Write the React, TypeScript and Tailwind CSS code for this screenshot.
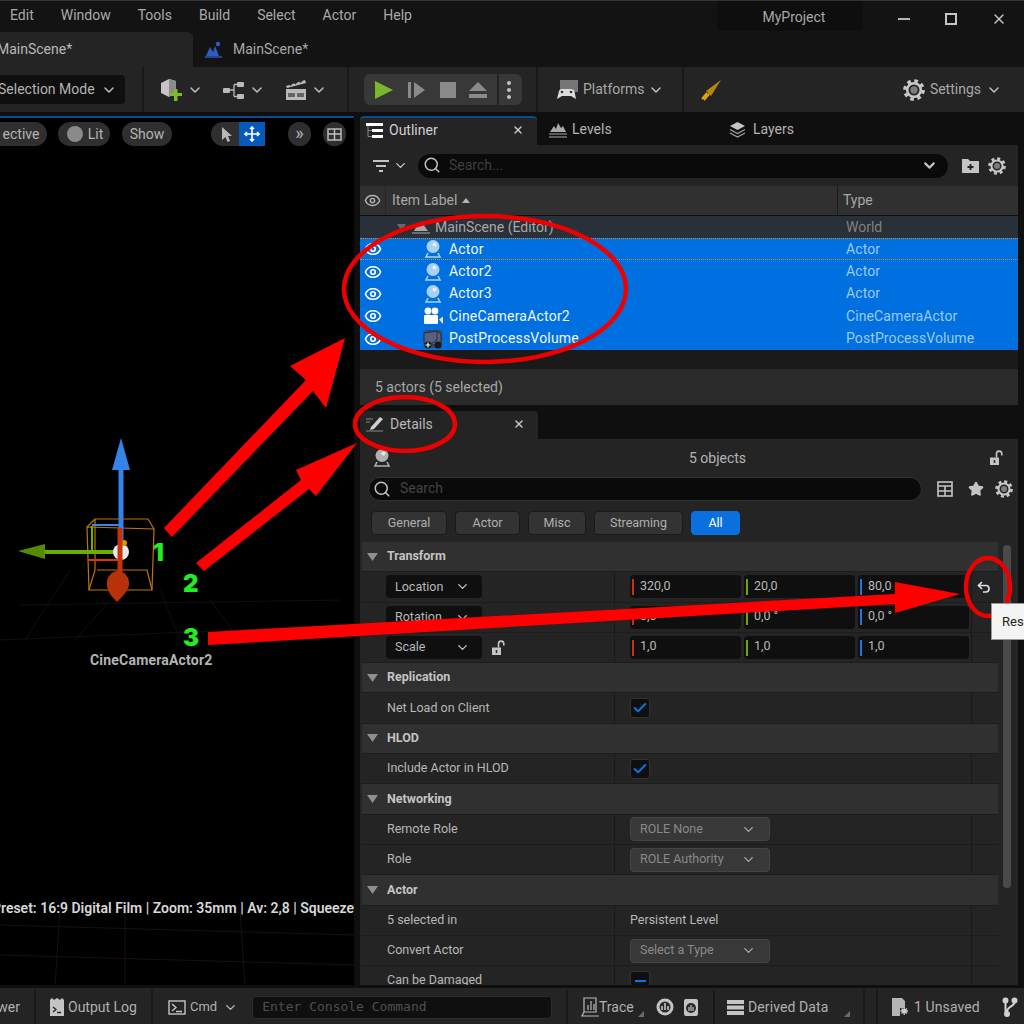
import { ChevronDown, Eye, Search, Star, X, Check } from "lucide-react";
import type { ReactNode } from "react";

function Chevron({ size = 16, className = "text-[#c0c0c0]" }: { size?: number; className?: string }) {
  return <ChevronDown size={size} strokeWidth={2.2} className={className} />;
}

function ActorIcon({ color = "#a9d0f5", size = 20 }: { color?: string; size?: number }) {
  return (
    <svg width={size} height={size} viewBox="0 0 20 20">
      <circle cx="10" cy="7.5" r="6.5" fill={color} />
      <circle cx="11.5" cy="5.5" r="2" fill="#ffffff" opacity="0.7" />
      <path d="M5 14 L3 18 H17 L15 14" fill="none" stroke={color} strokeWidth="1.6" />
    </svg>
  );
}

function CineIcon() {
  return (
    <svg width="20" height="18" viewBox="0 0 20 18">
      <circle cx="5" cy="4" r="3.4" fill="#fff" />
      <circle cx="12" cy="4" r="3.4" fill="#fff" />
      <rect x="1" y="8" width="14" height="9" rx="1" fill="#fff" />
      <path d="M16 12.5 L20 9.5 V17 Z" fill="#dfe9f5" />
    </svg>
  );
}

function VolumeIcon() {
  return (
    <svg width="20" height="20" viewBox="0 0 20 20">
      <rect x="1" y="1" width="18" height="18" rx="3" fill="#3d4a66" />
      <path d="M1 4 L14 2 L18 5 V14 L5 17 L1 14 Z" fill="#55617e" stroke="#1c2130" strokeWidth="0.8" />
      <path d="M14 2 V11 L5 17" fill="none" stroke="#1c2130" strokeWidth="0.8" />
      <circle cx="15" cy="16" r="3.5" fill="#191919" />
      <circle cx="5" cy="16" r="3.5" fill="#191919" />
      <path d="M5 13.5 V18.5 M2.5 16 H7.5" stroke="#fff" strokeWidth="1.2" />
    </svg>
  );
}

function LockOpen({ size = 16 }: { size?: number }) {
  return (
    <svg width={size} height={size} viewBox="0 0 16 16">
      <rect x="1" y="7.5" width="9" height="7.5" fill="#c4c4c4" />
      <rect x="4.7" y="10" width="1.6" height="3" fill="#333" />
      <path d="M7.5 7.5 V3.8 A2.6 2.6 0 0 1 12.8 3.8 V5.5" fill="none" stroke="#c4c4c4" strokeWidth="1.6" />
    </svg>
  );
}

function Gear({ size = 18 }: { size?: number }) {
  return (
    <svg width={size} height={size} viewBox="0 0 24 24" fill="none">
      <circle cx="12" cy="12" r="10" stroke="#c8c8c8" strokeWidth="3.6" strokeDasharray="4 3.854" />
      <circle cx="12" cy="12" r="7.4" stroke="#c8c8c8" strokeWidth="2.8" />
      <circle cx="12" cy="12" r="4" fill="#7c7c7c" />
    </svg>
  );
}

function Divider() {
  return <div className="h-full w-[2px] bg-[#181818]" />;
}

function CornerMark() {
  return (
    <svg width="6" height="6" viewBox="0 0 6 6" className="mt-[14px] shrink-0">
      <path d="M6 0 V6 H0 Z" fill="#6a6a6a" />
    </svg>
  );
}

function ToolbarIconGroup({ icon, width }: { icon: ReactNode; width: string }) {
  return (
    <div className={`flex items-center gap-[3px] ${width}`}>
      {icon}
      <Chevron />
    </div>
  );
}

function Pill({ children, className = "" }: { children: ReactNode; className?: string }) {
  return (
    <div className={`flex h-[24px] items-center justify-center rounded-full bg-[#2f2f2f] text-[14px] text-[#b4b4b4] ${className}`}>
      {children}
    </div>
  );
}

const actors = [
  { name: "Actor", type: "Actor", icon: <ActorIcon />, focus: true },
  { name: "Actor2", type: "Actor", icon: <ActorIcon /> },
  { name: "Actor3", type: "Actor", icon: <ActorIcon /> },
  { name: "CineCameraActor2", type: "CineCameraActor", icon: <CineIcon /> },
  { name: "PostProcessVolume", type: "PostProcessVolume", icon: <VolumeIcon /> },
];

function Triangle() {
  return (
    <svg width="11" height="8" viewBox="0 0 11 8" className="shrink-0">
      <path d="M0 0 H11 L5.5 8 Z" fill="#8f8f8f" />
    </svg>
  );
}

function SectionHeader({ label }: { label: string }) {
  return (
    <div className="flex h-[30.3px] items-center gap-[8px] border-b border-[#1c1c1c] bg-[#303030] pl-[3px] text-[12.5px] font-bold text-[#c4c4c4]">
      <span className="flex w-[14px] justify-center">
        <Triangle />
      </span>
      {label}
    </div>
  );
}

function PropertyRow({ left, right }: { left: ReactNode; right?: ReactNode }) {
  return (
    <div className="flex h-[30.3px] items-center overflow-hidden border-b border-[#1c1c1c] bg-[#242424] text-[12.5px] text-[#b8b8b8]">
      <div className="flex h-full w-[253px] shrink-0 items-center border-r border-[#1a1a1a] pl-[25px]">{left}</div>
      <div className="flex h-full w-[357px] shrink-0 items-center border-r border-[#1a1a1a] pl-[15px]">{right}</div>
    </div>
  );
}

function AxisField({ value, color }: { value: string; color: string }) {
  return (
    <div className="flex h-[23px] w-[111px] items-center rounded-[4px] bg-[#0f0f0f] pl-[2px] text-[12.5px] text-[#b8b8b8]">
      <span className={`mr-[6px] h-[16px] w-[2px] ${color}`} />
      <span className="-mt-[2px]">{value}</span>
    </div>
  );
}

function VectorFields({ values }: { values: string[] }) {
  return (
    <div className="flex gap-[3px]">
      <AxisField value={values[0]} color="bg-[#c9300f]" />
      <AxisField value={values[1]} color="bg-[#6aa500]" />
      <AxisField value={values[2]} color="bg-[#1f76e0]" />
    </div>
  );
}

function TransformSelect({ label }: { label: string }) {
  return (
    <div className="-ml-[1px] flex h-[23px] w-[96px] items-center justify-between rounded-[4px] bg-[#0f0f0f] pl-[9px] pr-[12px] text-[12.5px] text-[#b8b8b8]">
      {label}
      <Chevron size={15} />
    </div>
  );
}

function Checkbox({ dash }: { dash?: boolean }) {
  return (
    <div className="flex h-[20px] w-[20px] items-center justify-center rounded-[3px] border border-[#333] bg-[#0f0f0f]">
      {dash ? <div className="h-[2px] w-[11px] bg-[#0a74e8]" /> : <Check size={16} strokeWidth={3} className="text-[#0a74e8]" />}
    </div>
  );
}

function RoleSelect({ label }: { label: string }) {
  return (
    <div className="flex h-[24px] w-[140px] items-center justify-between rounded-[4px] border border-[#444] bg-[#383838] pl-[9px] pr-[13px] text-[12.5px] text-[#8a8a8a]">
      {label}
      <Chevron size={15} className="text-[#a8a8a8]" />
    </div>
  );
}

function FilterChip({ label, width, active }: { label: string; width: string; active?: boolean }) {
  return (
    <div
      className={`flex h-[24px] items-center justify-center rounded-[4px] border text-[12.5px] ${width} ${
        active ? "border-[#0a70e0] bg-[#0a70e0] text-white" : "border-[#1a1a1a] bg-[#333333] text-[#b0b0b0]"
      }`}
    >
      {label}
    </div>
  );
}

function Gizmo() {
  return (
    <svg className="absolute left-0 top-0" width="354" height="870" viewBox="0 118 354 870">
      {/* floor grid */}
      <g stroke="#101010" strokeWidth="1" fill="none">
        <path d="M0 640 L354 625 M20 605 L340 600 M70 570 L25 640 M110 600 L75 640 M160 590 L180 640 M210 600 L240 640" />
      </g>
      <g stroke="#1a0f0f" strokeWidth="1" fill="none">
        <path d="M0 925 L354 935 M0 955 L354 965 M60 910 L55 985 M125 910 L125 985 M240 910 L245 985" />
      </g>
      {/* selection box */}
      <g stroke="#b9760f" strokeWidth="1.2" fill="none">
        <path d="M87 527 L154 529 L152 590 L89 590 Z" />
        <path d="M95 519 L148 519 L154 529 M95 519 L87 527 M95 519 V570 L89 590 M97 570 H147 L152 590" />
      </g>
      <path d="M92 525 H120" stroke="#3a86e8" strokeWidth="2" />
      <path d="M92 526 V552" stroke="#6fae00" strokeWidth="2" />
      <path d="M88 560 H118" stroke="#d8360c" strokeWidth="2" />
      {/* green axis */}
      <path d="M45 552 H116" stroke="#6aaf00" strokeWidth="4" />
      <path d="M18 551 L45 544 V559 Z" fill="#558c00" />
      {/* blue axis */}
      <path d="M121 470 V545" stroke="#3583e8" strokeWidth="5" />
      <path d="M121 438 L130 470 H112 Z" fill="#3583e8" />
      <circle cx="121" cy="552" r="8" fill="#e8e8e8" />
      <circle cx="124" cy="543" r="3" fill="#d99a00" />
      {/* red axis */}
      <path d="M120 528 V575" stroke="#c8320b" strokeWidth="5" />
      <path d="M118 571 C125 571 130 578 129 585 C128 591 122 597 117 602 C112 597 107 591 107 585 C106 578 111 571 118 571 Z" fill="#b7310b" />
    </svg>
  );
}

function Annotations() {
  return (
    <>
      <svg className="pointer-events-none absolute left-0 top-0" width="1024" height="1024" viewBox="0 0 1024 1024">
        <g fill="none" stroke="#ef0000" strokeWidth="4.5">
          <ellipse cx="485" cy="289" rx="141" ry="73" />
          <ellipse cx="405" cy="424" rx="50" ry="27" />
          <ellipse cx="988" cy="587" rx="22" ry="29" />
        </g>
        <g fill="#ff0000">
          <path d="M164 528 L306 380 L290 366 L345 338 L326 408 L313 391 L172 537 Z" />
          <path d="M196 563 L301 480 L296 470 L357 443 L316 496 L309 489 L204 571 Z" />
          <path d="M208 632 L895 594 L895 582 L960 594 L895 613 L895 604 L208 645 Z" />
        </g>
      </svg>
      <span className="absolute left-[153px] top-[539px] text-[24px] font-black leading-[28px] text-[#1fee1f] [font-family:Inter,sans-serif]">1</span>
      <span className="absolute left-[183px] top-[570px] text-[24px] font-black leading-[28px] text-[#1fee1f] [font-family:Inter,sans-serif]">2</span>
      <span className="absolute left-[183px] top-[624px] text-[24px] font-black leading-[28px] text-[#1fee1f] [font-family:Inter,sans-serif]">3</span>
      {/* reset tooltip */}
      <div className="absolute left-[991px] top-[603px] flex h-[37px] w-[40px] items-center border border-[#999] bg-[#f4f4f4] pl-[10px] text-[13px] text-[#222]">
        Reset
      </div>
      <svg className="absolute left-[977px] top-[580px]" width="14" height="14" viewBox="0 0 14 14" fill="none" stroke="#e0e0e0" strokeWidth="1.6">
        <path d="M5 2 L1.5 5.5 L5 9" />
        <path d="M1.5 5.5 H9 C13 5.5 13 12 9 12 H6" />
      </svg>
    </>
  );
}

export default function App() {
  return (
    <div className="relative flex h-[1024px] w-[1024px] flex-col overflow-hidden bg-[#131313] text-[14px] text-[#b4b4b4] [font-family:Roboto,'Noto_Sans',sans-serif]">
      {/* Menu bar */}
      <div className="flex h-[32px] shrink-0 items-center border-t border-[#333] pb-[2px] pl-[10px]">
        <div className="flex gap-[27px] text-[#aaaaaa]">
          {["Edit", "Window", "Tools", "Build", "Select", "Actor", "Help"].map((m) => (
            <span key={m}>{m}</span>
          ))}
        </div>
        <div className="ml-[305px] flex h-[30px] w-[146px] items-center justify-center self-start rounded-b-[6px] bg-[#0e0e0e] pl-[8px] pt-[2px] text-[#a8a8a8]">
          MyProject
        </div>
        <div className="ml-[30px] flex items-center gap-[35px] pl-[5px] text-[#c4c4c4]">
          <div className="mt-[6px] h-[2px] w-[12px] bg-[#b4b4b4]" />
          <div className="mt-[6px] h-[12px] w-[12px] border-[2px] border-[#c4c4c4]" />
          <X size={16} strokeWidth={2.2} className="mt-[6px] translate-x-[-1px]" />
        </div>
      </div>

      {/* Level tabs */}
      <div className="flex h-[35px] shrink-0 items-center">
        <div className="flex h-full w-[193px] items-center rounded-tr-[6px] bg-[#242424] text-[#b8b8b8]">
          <span className="-ml-[3px]">MainScene*</span>
        </div>
        <div className="ml-[12px] flex items-center gap-[11px] text-[#a8a8a8]">
          <svg width="17" height="17" viewBox="0 0 17 17">
            <path d="M1 15 L5 6 L8 11 L10 5 L14 15 Z" fill="#2f5bc4" />
            <path d="M0 16 H17" stroke="#2f5bc4" strokeWidth="1.4" />
            <circle cx="13" cy="3" r="2.2" fill="#2f5bc4" />
          </svg>
          <span>MainScene*</span>
        </div>
      </div>

      {/* Main toolbar */}
      <div className="flex h-[45px] shrink-0 items-center bg-[#242424]">
        <div className="flex h-full w-[142px] items-center">
          <div className="flex h-[29px] w-[125px] items-center justify-between rounded-r-[4px] bg-[#0f0f0f] pr-[8px] text-[#b4b4b4]">
            <span className="-ml-[2px]">Selection Mode</span>
            <Chevron />
          </div>
        </div>
        <Divider />
        <div className="flex h-full w-[203px] items-center pl-[16px]">
          <ToolbarIconGroup
            width="w-[62px]"
            icon={
              <svg width="24" height="24" viewBox="0 0 24 24">
                <path d="M1 5 L9 1 L16 3 V13 L9 19 L1 15 Z" fill="#c4c4c4" />
                <path d="M9 1 L16 3 V13 L9 19 Z" fill="#8c8c8c" />
                <path d="M14 11 H17.5 V15 H22 V18 H17.5 V23 H14 V18 H10 V15 H14 Z" fill="#7dbb2a" />
              </svg>
            }
          />
          <ToolbarIconGroup
            width="w-[62px]"
            icon={
              <svg width="24" height="22" viewBox="0 0 24 22" fill="#b9b9b9">
                <rect x="1" y="9" width="7" height="5" rx="1" />
                <rect x="15" y="3" width="7" height="5" rx="1" />
                <rect x="15" y="15" width="7" height="5" rx="1" />
                <path d="M8 11 H12 M12 5.5 V17.5 M12 5.5 H15 M12 17.5 H15" stroke="#b9b9b9" strokeWidth="1.3" fill="none" />
              </svg>
            }
          />
          <ToolbarIconGroup
            width="w-[60px]"
            icon={
              <svg width="24" height="24" viewBox="0 0 24 24" fill="#b9b9b9">
                <path d="M2 8 L21 2 L22 5 L3 10 Z" />
                <path d="M6 7.5 L8 4.8 M11 6 L13 3.5 M16 4.5 L18 2.5" stroke="#242424" strokeWidth="1.5" />
                <rect x="2" y="11" width="20" height="11" />
                <rect x="4" y="15" width="7" height="4" fill="#666" />
                <rect x="13" y="15" width="7" height="4" fill="#666" />
              </svg>
            }
          />
        </div>
        <Divider />
        <div className="flex h-full w-[187px] items-center pl-[15px]">
          <div className="flex h-[31px] w-[158px] items-center rounded-[6px] bg-[#383838]">
            <svg width="20" height="20" viewBox="0 0 20 20" className="ml-[10px]">
              <path d="M1 1 L19 10 L1 19 Z" fill="#79b82c" />
            </svg>
            <svg width="18" height="18" viewBox="0 0 18 18" className="ml-[14px]" fill="#8a8a8a">
              <rect x="0" y="1" width="3" height="16" />
              <path d="M6 1 L17 9 L6 17 Z" />
            </svg>
            <div className="ml-[14px] h-[16px] w-[16px] bg-[#8a8a8a]" />
            <svg width="20" height="18" viewBox="0 0 20 18" className="ml-[12px]" fill="#8a8a8a">
              <path d="M10 1 L19 10 H1 Z" />
              <rect x="1" y="13" width="18" height="4" />
            </svg>
            <div className="ml-[9px] h-full w-[2px] bg-[#242424]" />
            <div className="ml-[8px] flex flex-col gap-[3px]">
              <span className="h-[4px] w-[4px] rounded-full bg-[#c4c4c4]" />
              <span className="h-[4px] w-[4px] rounded-full bg-[#c4c4c4]" />
              <span className="h-[4px] w-[4px] rounded-full bg-[#c4c4c4]" />
            </div>
          </div>
        </div>
        <Divider />
        <div className="flex h-full w-[144px] items-center gap-[3px] pl-[18px] text-[#a8a8a8]">
          <svg width="24" height="22" viewBox="0 0 24 22">
            <rect x="4" y="1" width="18" height="12" fill="#777" />
            <path d="M1 20 L3 12 C3.5 10.5 5 10 6 10 H15 C17 10 18 11 18.5 12.5 L20 20 L15 17 H6 Z" fill="#dcdcdc" />
            <circle cx="6" cy="13" r="1.3" fill="#333" />
            <circle cx="15" cy="13" r="1.3" fill="#333" />
          </svg>
          <span>Platforms</span>
          <Chevron />
        </div>
        <Divider />
        <div className="flex h-full flex-1 items-center pl-[16px] pr-[22px]">
          <svg width="22" height="22" viewBox="0 0 22 22">
            <path d="M21 1 L11 17 L6 12 Z" fill="#b8860b" />
            <path d="M7 14 L2 20 M9 15 L4 21" stroke="#d9a514" strokeWidth="2" />
          </svg>
          <div className="ml-auto flex items-center gap-[5px] text-[#a8a8a8]">
            <Gear size={22} />
            <span>Settings</span>
            <Chevron />
          </div>
        </div>
      </div>

      {/* Content */}
      <div className="flex min-h-0 flex-1 bg-[#0f0f0f]">
        {/* Viewport */}
        <div className="flex h-[873px] w-[354px] shrink-0 flex-col pt-[4px]">
          <div className="h-[2px] shrink-0 bg-[#0b4a8c]" />
          <div className="relative flex-1 overflow-hidden bg-black">
            <Gizmo />
            <div className="relative flex items-center pt-[4px]">
              <Pill className="w-[47px] rounded-l-none pr-[5px]">ective</Pill>
              <Pill className="ml-[11px] w-[52px] gap-[5px] pl-[2px]">
                <span className="h-[16px] w-[16px] rounded-full bg-[#8a8a8a]" />
                Lit
              </Pill>
              <Pill className="ml-[12px] w-[50px]">Show</Pill>
              <div className="ml-[39px] flex h-[24px] w-[54px] items-center overflow-hidden rounded-l-full bg-[#2f2f2f]">
                <svg width="28" height="24" viewBox="0 0 28 24" className="shrink-0">
                  <path d="M11 5 L21 14 H17 L19 19 L16.5 20 L14.5 15 L11 18 Z" fill="#b8b8b8" />
                </svg>
                <div className="flex h-full flex-1 items-center justify-center bg-[#0559b8]">
                  <svg width="16" height="16" viewBox="0 0 16 16" fill="none" stroke="#fff" strokeWidth="1.6">
                    <path d="M8 1 V15 M1 8 H15 M6 3 L8 1 L10 3 M6 13 L8 15 L10 13 M3 6 L1 8 L3 10 M13 6 L15 8 L13 10" />
                  </svg>
                </div>
              </div>
              <Pill className="ml-[23px] w-[23px] pb-[3px] text-[18px] text-[#a0a0a0]">»</Pill>
              <Pill className="ml-[12px] w-[23px]">
                <svg width="15" height="13" viewBox="0 0 15 13" fill="none" stroke="#c4c4c4" strokeWidth="1.4">
                  <rect x="1" y="1" width="13" height="11" />
                  <path d="M7.5 1 V12 M1 6 H14" />
                </svg>
              </Pill>
            </div>
            <span className="absolute left-[90px] top-[532px] text-[14px] font-bold tracking-[0.2px] text-[#b4b4b4]">CineCameraActor2</span>
            <span className="absolute -left-[8px] top-[780px] whitespace-nowrap text-[14px] font-semibold text-[#d8d8d8]">
              Preset: 16:9 Digital Film | Zoom: 35mm | Av: 2,8 | Squeeze
            </span>
          </div>
        </div>

        {/* Right side panels */}
        <div className="ml-[6px] flex h-[873px] w-[658px] shrink-0 flex-col overflow-hidden">
          {/* Outliner tabs */}
          <div className="flex h-[33px] shrink-0 pt-[4px] text-[#b4b4b4]">
            <div className="flex h-full w-[177px] shrink-0 items-center rounded-t-[4px] border-t-2 border-[#0b4a8c] bg-[#242424] pb-[3px] pl-[6px] text-[#d0d0d0]">
              <svg width="17" height="15" viewBox="0 0 17 15" className="mr-[6px]">
                <rect x="0" y="0" width="17" height="3" fill="#fff" />
                <rect x="6" y="6" width="11" height="3" fill="#fff" />
                <rect x="6" y="12" width="11" height="3" fill="#fff" />
                <path d="M2 3 V13.5 H6 M2 7.5 H6" stroke="#888" fill="none" />
              </svg>
              Outliner
              <X size={12} strokeWidth={3} className="ml-auto mr-[13px] text-[#c4c4c4]" />
            </div>
            <div className="ml-[12px] flex w-[184px] items-center gap-[5px] pb-[2px]">
              <svg width="18" height="16" viewBox="0 0 18 16" fill="#a8a8a8">
                <path d="M1 10 L5 4 L7 7 L9 1 L12 6 L14 4 L17 10 Z" />
                <path d="M0 12 H18 M0 15 H18" stroke="#a8a8a8" />
              </svg>
              Levels
            </div>
            <div className="-ml-[4px] flex items-center gap-[7px] pb-[2px]">
              <svg width="17" height="17" viewBox="0 0 17 17">
                <path d="M8.5 1 L16 5 L8.5 9 L1 5 Z" fill="#c4c4c4" />
                <path d="M1 8.5 L8.5 12.5 L16 8.5 M1 12 L8.5 16 L16 12" stroke="#a0a0a0" strokeWidth="1.2" fill="none" />
              </svg>
              Layers
            </div>
          </div>
          {/* Outliner toolbar */}
          <div className="flex h-[41px] shrink-0 items-center bg-[#242424] pl-[13px]">
            <svg width="16" height="12" viewBox="0 0 16 12" fill="#c4c4c4">
              <rect x="0" y="0" width="16" height="2" />
              <rect x="3" y="5" width="10" height="2" />
              <rect x="6" y="10" width="4" height="2" />
            </svg>
            <Chevron size={15} className="ml-[4px] text-[#c4c4c4]" />
            <div className="ml-[10px] flex h-[24px] w-[530px] items-center rounded-full bg-[#0a0a0a] pb-[1px] pl-[5px] pr-[10px] text-[#3f3f3f]">
              <Search size={18} strokeWidth={2} className="mr-[8px] text-[#c0c0c0]" />
              Search...
              <ChevronDown size={17} strokeWidth={3} className="ml-auto text-[#c4c4c4]" />
            </div>
            <svg width="17" height="15" viewBox="0 0 17 15" className="ml-[14px]">
              <path d="M0 1 H6 L8 3 H17 V15 H0 Z" fill="#c4c4c4" />
              <path d="M8.5 6 V12 M5.5 9 H11.5" stroke="#222" strokeWidth="1.8" />
            </svg>
            <div className="ml-[9px]">
              <Gear />
            </div>
          </div>
          {/* Column header */}
          <div className="flex h-[29px] shrink-0 items-center bg-[#303030] text-[#a8a8a8]">
            <div className="flex h-full w-[26px] items-center justify-center border-r border-[#262626]">
              <Eye size={17} className="text-[#b4b4b4]" />
            </div>
            <div className="flex h-full w-[452px] items-center gap-[5px] border-r border-[#1c1c1c] pl-[6px]">
              Item Label
              <svg width="8" height="5" viewBox="0 0 8 5">
                <path d="M0 5 L4 0 L8 5 Z" fill="#b4b4b4" />
              </svg>
            </div>
            <span className="pl-[5px]">Type</span>
          </div>
          {/* Rows */}
          <div className="mt-[1px] flex h-[134px] shrink-0 flex-col">
            <div className="flex h-[22px] shrink-0 items-center bg-[#2a3038] text-[#8e8e8e]">
              <svg width="9" height="7" viewBox="0 0 9 7" className="ml-[37px]">
                <path d="M0 0 H9 L4.5 7 Z" fill="#666" />
              </svg>
              <svg width="18" height="14" viewBox="0 0 18 14" className="ml-[6px]">
                <path d="M2 11 L6 4 L8 7 L10 1 L13 7 L16 11 Z" fill="#a8a8a8" />
                <path d="M0 13 H18" stroke="#a8a8a8" />
              </svg>
              <span className="ml-[5px] text-[#a8a8a8]">MainScene (Editor)</span>
              <span className="ml-auto w-[172px] text-[#808080]">World</span>
            </div>
            {actors.map((a) => (
              <div
                key={a.name}
                className={`flex h-[22.4px] shrink-0 items-center bg-[#0070e0] text-[#f0f6ff] ${
                  a.focus ? "border-y border-dotted border-[#d08a20]" : ""
                }`}
              >
                <div className="ml-[4px] w-[59px]">
                  <Eye size={18} strokeWidth={2.2} className="text-white" />
                </div>
                <div className="flex w-[26px] justify-start">{a.icon}</div>
                <span className="w-[397px] tracking-[0.2px]">{a.name}</span>
                <span className="tracking-[0.1px] text-[#9cc9f5]">{a.type}</span>
              </div>
            ))}
          </div>
          <div className="h-[19px] shrink-0 bg-[#1a1a1a]" />
          <div className="flex h-[36px] shrink-0 items-center bg-[#2a2a2a] pl-[15px] text-[#a8a8a8]">5 actors (5 selected)</div>

          {/* Details tab */}
          <div className="flex h-[34px] shrink-0 items-end bg-[#0f0f0f]">
            <div className="flex h-[28px] w-[178px] items-center rounded-t-[4px] bg-[#242424] pb-[2px] pl-[6px] text-[#b8b8b8]">
              <svg width="18" height="18" viewBox="0 0 18 18" className="mr-[6px]">
                <path d="M5 12 L14 2 L17 4 L8 14 L4 15 Z" fill="#d0d0d0" />
                <path d="M0 4 H7 M0 7 H4 M0 16 H17" stroke="#888" />
              </svg>
              Details
              <X size={12} strokeWidth={3} className="ml-auto mr-[13px] text-[#c4c4c4]" />
            </div>
          </div>

          {/* Details body */}
          <div className="flex min-h-0 flex-1 flex-col overflow-hidden bg-[#242424]">
            <div className="flex h-[38px] shrink-0 items-center pl-[12px] pr-[13px] text-[#b4b4b4]">
              <ActorIcon color="#b0b0b0" />
              <span className="flex-1 pl-[54px] text-center">5 objects</span>
              <LockOpen />
            </div>
            <div className="flex h-[24px] shrink-0 items-center pl-[8px]">
              <div className="flex h-full w-[554px] items-center rounded-full border border-[#333] bg-[#0a0a0a] pb-[1px] pl-[4px] text-[#444]">
                <Search size={18} strokeWidth={2} className="mr-[9px] text-[#c0c0c0]" />
                Search
              </div>
              <svg width="16" height="16" viewBox="0 0 16 16" className="ml-[15px]" fill="none" stroke="#c4c4c4" strokeWidth="1.6">
                <rect x="1" y="1" width="14" height="14" />
                <path d="M1 5 H15 M1 10 H15 M8 5 V15" />
              </svg>
              <Star size={16} fill="#c4c4c4" className="ml-[15px] text-[#c4c4c4]" />
              <div className="ml-[11px]">
                <Gear />
              </div>
            </div>
            <div className="mt-[10px] flex h-[24px] shrink-0 gap-[8px] pl-[11px]">
              <FilterChip label="General" width="w-[76px]" />
              <FilterChip label="Actor" width="w-[65px]" />
              <FilterChip label="Misc" width="w-[58px]" />
              <FilterChip label="Streaming" width="w-[89px]" />
              <FilterChip label="All" width="w-[49px]" active />
            </div>
            <div className="mt-[7px] flex min-h-0 flex-1 overflow-hidden pl-[2px]">
              <div className="w-[636px] shrink-0">
                <SectionHeader label="Transform" />
                <PropertyRow left={<TransformSelect label="Location" />} right={<VectorFields values={["320,0", "20,0", "80,0"]} />} />
                <PropertyRow left={<TransformSelect label="Rotation" />} right={<VectorFields values={["0,0", "0,0 °", "0,0 °"]} />} />
                <PropertyRow
                  left={
                    <>
                      <TransformSelect label="Scale" />
                      <span className="ml-[9px]">
                        <LockOpen />
                      </span>
                    </>
                  }
                  right={<VectorFields values={["1,0", "1,0", "1,0"]} />}
                />
                <SectionHeader label="Replication" />
                <PropertyRow left="Net Load on Client" right={<Checkbox />} />
                <SectionHeader label="HLOD" />
                <PropertyRow left="Include Actor in HLOD" right={<Checkbox />} />
                <SectionHeader label="Networking" />
                <PropertyRow left="Remote Role" right={<RoleSelect label="ROLE None" />} />
                <PropertyRow left="Role" right={<RoleSelect label="ROLE Authority" />} />
                <SectionHeader label="Actor" />
                <PropertyRow left="5 selected in" right="Persistent Level" />
                <PropertyRow left="Convert Actor" right={<RoleSelect label="Select a Type" />} />
                <PropertyRow left="Can be Damaged" right={<Checkbox dash />} />
              </div>
              <div className="ml-[5px] mt-[3px] h-[343px] w-[8px] rounded-full bg-[#4a4a4a]" />
            </div>
          </div>
        </div>
      </div>

      {/* Status bar */}
      <div className="flex h-[36px] shrink-0 items-center bg-[#242424] pt-[2px] text-[#b0b0b0]">
        <div className="flex h-full w-[34px] items-center justify-end pr-[14px]">wer</div>
        <Divider />
        <div className="flex h-full w-[115px] items-center gap-[3px] pl-[13px]">
          <svg width="16" height="20" viewBox="0 0 16 20">
            <path d="M1 3 L3 1 L5 3 L8 1 L11 3 L13 1 L15 3 V19 H1 Z" fill="#c4c4c4" />
            <path d="M4 10 L7 12.5 L4 15 M8 15.5 H12" stroke="#222" strokeWidth="1.3" fill="none" />
          </svg>
          Output Log
        </div>
        <Divider />
        <div className="flex h-full w-[413px] items-center pl-[15px]">
          <svg width="18" height="15" viewBox="0 0 18 15" fill="none" stroke="#c4c4c4" strokeWidth="1.4">
            <rect x="1" y="1" width="16" height="13" />
            <path d="M4 4 L8 7.5 L4 11 M8 11.5 H14" />
          </svg>
          <span className="ml-[4px] text-[13px]">Cmd</span>
          <Chevron size={15} className="ml-[6px] text-[#b8b8b8]" />
          <div className="ml-[14px] flex h-[23px] w-[300px] items-center rounded-[4px] border border-[#2c2c2c] bg-[#0f0f0f] pl-[9px] text-[13px] text-[#4e4e4e] [font-family:'DejaVu_Sans_Mono',monospace]">
            Enter Console Command
          </div>
        </div>
        <Divider />
        <div className="flex h-full w-[145px] items-center pl-[12px]">
          <svg width="20" height="20" viewBox="0 0 20 20" fill="none" stroke="#b8b8b8" strokeWidth="1.2">
            <path d="M4 1 H16 V15 H4 Z M1 19 H19 M4 15 L2 19" />
            <path d="M8 13 V8 M11 13 V4 M14 13 V7" />
          </svg>
          <span className="-ml-[1px]">Trace</span>
          <span className="ml-[4px]">
            <CornerMark />
          </span>
          <svg width="26" height="22" viewBox="0 0 26 22" className="ml-[10px] shrink-0">
            <circle cx="11" cy="11" r="8.5" fill="#c4c4c4" />
            <circle cx="11" cy="11" r="5.5" fill="#2a2a2a" />
            <path d="M8 14 V10 M11 14 V7 M14 14 V10" stroke="#c4c4c4" strokeWidth="1.6" />
          </svg>
          <svg width="18" height="20" viewBox="0 0 18 20" className="ml-[2px] shrink-0">
            <rect x="2" y="2" width="14" height="17" rx="2" fill="#c4c4c4" />
            <circle cx="9" cy="11" r="5" fill="#2a2a2a" />
            <path d="M7 14 V10 M9 14 V8 M11 14 V10" stroke="#c4c4c4" strokeWidth="1.2" />
          </svg>
        </div>
        <Divider />
        <div className="flex h-full w-[148px] items-center gap-[4px] pl-[12px]">
          <svg width="17" height="17" viewBox="0 0 17 17" fill="#c4c4c4">
            <rect x="0" y="1" width="17" height="4" />
            <rect x="0" y="6.5" width="17" height="4" />
            <rect x="0" y="12" width="17" height="4" />
          </svg>
          <span className="tracking-[0.1px]">Derived Data</span>
          <span className="ml-[12px]">
            <CornerMark />
          </span>
        </div>
        <Divider />
        <div className="w-[11px]" />
        <Divider />
        <div className="flex h-full flex-1 items-center pl-[13px] pr-[6px]">
          <svg width="17" height="20" viewBox="0 0 17 20">
            <path d="M1 1 H11 L14 4 V11 H9 V19 H1 Z" fill="#b4b4b4" />
            <path d="M9.5 14 H17 M13.2 10.5 V18 M10.5 11.5 L16 16.5 M16 11.5 L10.5 16.5" stroke="#d0d0d0" strokeWidth="1.3" />
          </svg>
          <span className="ml-[6px] tracking-[0.1px]">1 Unsaved</span>
          <svg width="16" height="20" viewBox="0 0 16 20" className="ml-auto" fill="none" stroke="#d0d0d0" strokeWidth="2">
            <circle cx="3.5" cy="3.5" r="2" fill="#d0d0d0" />
            <circle cx="12.5" cy="3.5" r="2" fill="#d0d0d0" />
            <circle cx="5" cy="17" r="2" fill="#d0d0d0" />
            <path d="M3.5 5 V15 M12.5 5 C12.5 10 5 9 5 15" />
          </svg>
        </div>
      </div>

      <Annotations />
    </div>
  );
}
